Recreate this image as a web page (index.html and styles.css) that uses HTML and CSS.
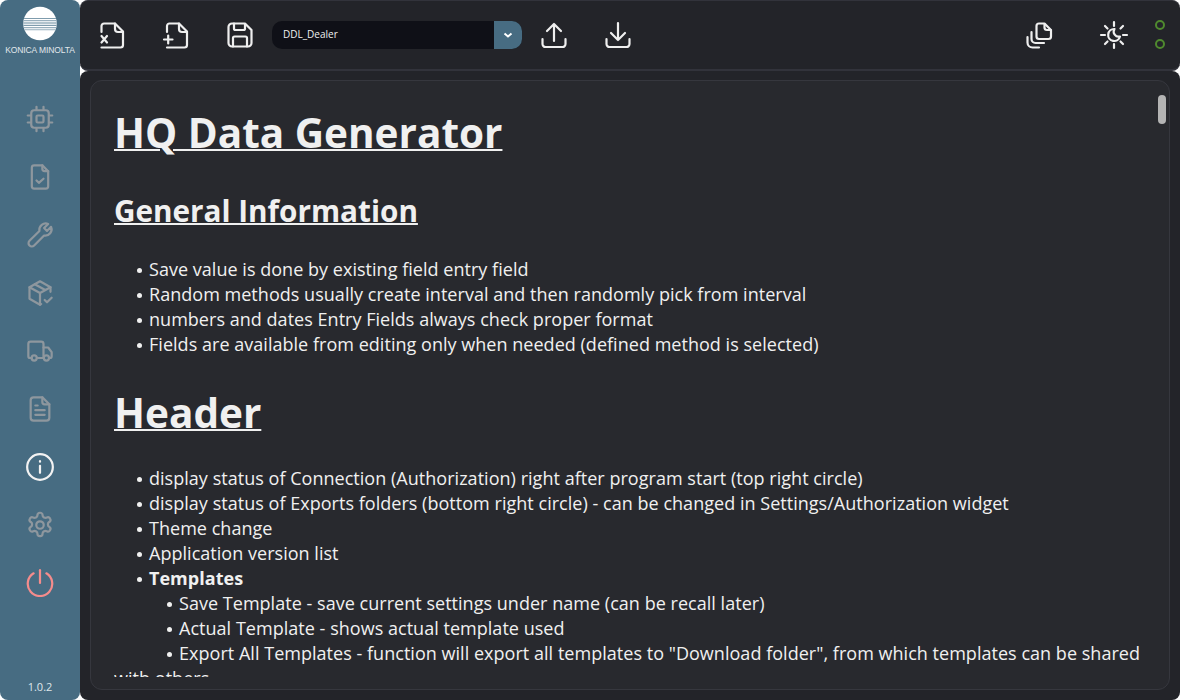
FILE: index.html
```html
<!DOCTYPE html>
<html lang="en">
<head>
<meta charset="utf-8">
<title>HQ Data Generator</title>
<link rel="stylesheet" href="styles.css">
</head>
<body>
<div class="app">
  <aside class="sidebar">
    <div class="logo">
      <svg class="globe" width="34" height="35" viewBox="0 0 34 35">
        <defs><clipPath id="gc"><circle cx="17" cy="17.500" r="16.800"/></clipPath></defs>
        <circle cx="17" cy="17.500" r="16.800" fill="#fff"/>
        <g clip-path="url(#gc)" fill="#7f9cad"><rect x="0" y="12" width="34" height="1"/><rect x="0" y="14.200" width="34" height="1"/><rect x="0" y="16.400" width="34" height="1.200"/><rect x="0" y="18.800" width="34" height="1.200"/><rect x="0" y="21.200" width="34" height="1"/><rect x="0" y="23.400" width="34" height=".8"/></g>
      </svg>
      <div class="brand">KONICA MINOLTA</div>
    </div>
    <nav class="nav">
      <a class="nav-item"><svg viewBox="0 0 24 24"><rect x="4.500" y="4.500" width="15" height="15" rx="2.500"/><rect x="9" y="9" width="6" height="6" rx="1"/><path d="M1.500 9H4M1.500 15H4M20 9h2.500M20 15h2.500M9 1.500V4M15 1.500V4M9 20v2.500M15 20v2.500"/></svg></a>
      <a class="nav-item"><svg viewBox="0 0 24 24"><path d="M14 2H7a2 2 0 0 0-2 2v16a2 2 0 0 0 2 2h10a2 2 0 0 0 2-2V7z"/><path d="M14 2v3a2 2 0 0 0 2 2h3"/><path d="M9 15l2 2 4-3.500"/></svg></a>
      <a class="nav-item"><svg viewBox="0 0 24 24"><path d="M7 21l8.500-8.500a5.500 5.500 0 0 0 6-7.500L18 8.500 15.500 6 19 2.500a5.500 5.500 0 0 0-7.500 6L3 17a2.800 2.800 0 0 0 4 4z"/></svg></a>
      <a class="nav-item"><svg viewBox="0 0 24 24"><path d="M21 11V7l-9-5-9 5v10l9 5 1-.5"/><path d="M3 7l9 5 9-5M12 12v10M7.500 4.500l9 5"/><path d="M16 18l2 2 4-4"/></svg></a>
      <a class="nav-item"><svg viewBox="0 0 24 24"><path d="M5 18H3.500A1.500 1.500 0 0 1 2 16.500V6a2 2 0 0 1 2-2h9a2 2 0 0 1 2 2v12H9.500"/><path d="M15 9h4l3 4v3.500a1.500 1.500 0 0 1-1.500 1.500H20"/><circle cx="7" cy="18" r="2.200"/><circle cx="17.500" cy="18" r="2.200"/></svg></a>
      <a class="nav-item"><svg viewBox="0 0 24 24"><path d="M14 2H6.500A2.500 2.500 0 0 0 4 4.500v15A2.500 2.500 0 0 0 6.500 22h11a2.500 2.500 0 0 0 2.500-2.500V8z"/><path d="M14 2v4a2 2 0 0 0 2 2h4M8 9h2M8 13h8M8 17h8"/></svg></a>
      <a class="nav-item active"><svg viewBox="0 0 24 24"><circle cx="12" cy="12" r="11"/><path d="M12 11v6"/><path d="M12 7v.4"/></svg></a>
      <a class="nav-item"><svg viewBox="0 0 24 24"><path d="M12.200 1.500h-.4a2 2 0 0 0-2 2v.2a2 2 0 0 1-1 1.700l-.4.300a2 2 0 0 1-2 0l-.2-.1a2 2 0 0 0-2.700.7l-.2.400a2 2 0 0 0 .7 2.700l.2.100a2 2 0 0 1 1 1.700v.6a2 2 0 0 1-1 1.700l-.2.100a2 2 0 0 0-.7 2.700l.2.400a2 2 0 0 0 2.700.7l.2-.1a2 2 0 0 1 2 0l.4.300a2 2 0 0 1 1 1.700v.2a2 2 0 0 0 2 2h.4a2 2 0 0 0 2-2v-.2a2 2 0 0 1 1-1.700l.4-.3a2 2 0 0 1 2 0l.2.100a2 2 0 0 0 2.700-.7l.2-.4a2 2 0 0 0-.7-2.700l-.2-.1a2 2 0 0 1-1-1.700v-.6a2 2 0 0 1 1-1.700l.2-.1a2 2 0 0 0 .7-2.700l-.2-.4a2 2 0 0 0-2.700-.7l-.2.100a2 2 0 0 1-2 0l-.4-.3a2 2 0 0 1-1-1.700v-.2a2 2 0 0 0-2-2z"/><circle cx="12" cy="12" r="3.200"/></svg></a>
      <a class="nav-item power"><svg viewBox="0 0 24 24"><path d="M12 1v11"/><path d="M6.500 3.700A10.500 10.500 0 1 0 17.500 3.700"/></svg></a>
    </nav>
    <div class="version">1.0.2</div>
  </aside>

  <div class="right">
    <header class="topbar">
      <button class="tool"><svg viewBox="0 0 26 26"><path d="M2.500 10V4A2.500 2.500 0 0 1 5 1.500h11l8 8V23a2.500 2.500 0 0 1-2.500 2.500h-19"/><path d="M16 1.500V7a3 3 0 0 0 3 3h5"/><path d="M2.500 14l5.500 6.500M8 14l-5.500 6.500"/></svg></button>
      <button class="tool"><svg viewBox="0 0 26 26"><path d="M4 10V4a2.500 2.500 0 0 1 2.500-2.500H16l8 8V23a2.500 2.500 0 0 1-2.500 2.500H4"/><path d="M16 1.500V7a3 3 0 0 0 3 3h5"/><path d="M1 17.500h8.500M5.200 13.500v8"/></svg></button>
      <button class="tool"><svg viewBox="0 0 26 26"><path d="M18 1.500H5A3.500 3.500 0 0 0 1.500 5v16A3.500 3.500 0 0 0 5 24.500h16a3.500 3.500 0 0 0 3.500-3.500V8z"/><path d="M7 1.500v5a1.500 1.500 0 0 0 1.500 1.500h8A1.500 1.500 0 0 0 18 6.500V2"/><path d="M6 24.500V16a1.500 1.500 0 0 1 1.500-1.500h11A1.500 1.500 0 0 1 20 16v8.500"/></svg></button>
      <div class="combo">
        <span class="combo-text">DDL_Dealer</span>
        <span class="combo-btn"><svg viewBox="0 0 10 6"><path d="M1.500 1.500L5 4.500l3.500-3"/></svg></span>
      </div>
      <button class="tool"><svg viewBox="0 0 26 26"><path d="M1.500 17v5a3 3 0 0 0 3 3h17a3 3 0 0 0 3-3v-5"/><path d="M13 19V2M6 9l7-7 7 7"/></svg></button>
      <button class="tool"><svg viewBox="0 0 26 26"><path d="M1.500 17v5a3 3 0 0 0 3 3h17a3 3 0 0 0 3-3v-5"/><path d="M13 1v17M6 11l7 7 7-7"/></svg></button>
      <div class="spacer"></div>
      <button class="tool copy"><svg viewBox="0 0 26 26"><path d="M13 1.500h5.500L25 8v6.500a2.500 2.500 0 0 1-2.500 2.500H13a2.500 2.500 0 0 1-2.500-2.500V4A2.500 2.500 0 0 1 13 1.500z"/><path d="M18.500 2v3.500a2.500 2.500 0 0 0 2.500 2.500h3.500"/><path d="M5.500 10v7a4 4 0 0 0 4 4H18"/><path d="M1.500 15v5.500a5 5 0 0 0 5 5H13"/></svg></button>
      <button class="tool theme"><svg viewBox="0 0 28 28"><path d="M14 1v4M14 23v4M1 14h4M23 14h4M5 5l2.500 2.500M20.500 20.500L23 23M5 23l2.500-2.500M20.500 7.500L23 5"/><path d="M14.500 8a6 6 0 1 0 5.500 7.500 5 5 0 0 1-5.500-7.500z"/></svg></button>
      <div class="status"><span class="dot"></span><span class="dot"></span></div>
    </header>

    <main class="main">
      <article class="doc">
        <div class="scroll-thumb"></div>
        <div class="doc-scroll">
          <h1>HQ Data Generator</h1>
          <h2>General Information</h2>
          <ul>
            <li>Save value is done by existing field entry field</li>
            <li>Random methods usually create interval and then randomly pick from interval</li>
            <li>numbers and dates Entry Fields always check proper format</li>
            <li>Fields are available from editing only when needed (defined method is selected)</li>
          </ul>
          <h1 class="h1-next">Header</h1>
          <ul>
            <li>display status of Connection (Authorization) right after program start (top right circle)</li>
            <li>display status of Exports folders (bottom right circle) - can be changed in Settings/Authorization widget</li>
            <li>Theme change</li>
            <li>Application version list</li>
            <li class="strong">Templates</li>
          </ul>
          <ul class="sub">
            <li>Save Template - save current settings under name (can be recall later)</li>
            <li>Actual Template - shows actual template used</li>
            <li>Export All Templates - function will export all templates to "Download folder", from which templates can be shared with others</li>
          </ul>
        </div>
      </article>
    </main>
  </div>
</div>
</body>
</html>
```

FILE: styles.css
```css
* { box-sizing: border-box; }
html, body { margin: 0; height: 100%; background: #fff; }
body { font-family: "Open Sans", "Noto Sans", sans-serif; overflow: hidden; }
.app { display: flex; width: 1180px; height: 700px; }

.sidebar {
  width: 80px; flex: none; background: #476c82; border-radius: 8px;
  display: flex; flex-direction: column; align-items: center;
}
.logo { display: flex; flex-direction: column; align-items: center; height: 90px; padding-top: 6px; }
.globe { display: block; }
.brand { font-family: "Liberation Sans", sans-serif; font-size: 8.500px; line-height: 10px; color: #e2e8ec; margin-top: 4px; white-space: nowrap; letter-spacing: -.1px; }
.nav { display: flex; flex-direction: column; align-items: center; gap: 30px; margin-top: 15px; }
.nav-item { display: block; width: 28px; height: 28px; color: #8e979e; }
.nav-item svg { display: block; width: 28px; height: 28px; fill: none; stroke: currentColor; stroke-width: 1.900; stroke-linecap: round; stroke-linejoin: round; }
.nav-item.active { color: #f2f2f2; }
.nav-item.power { color: #f58c8c; }
.version { margin-top: auto; padding-bottom: 6px; font-size: 11px; line-height: 15px; color: #dfe6ea; }

.right { flex: 1; min-width: 0; display: flex; flex-direction: column; }
.topbar {
  height: 71px; flex: none; background: #232429; border-radius: 8px;
  border-top: 1px solid #32333b; border-bottom: 2px solid #32333b;
  display: flex; align-items: center; padding: 0 15px 0 19px;
}
.tool { width: 26px; height: 26px; padding: 0; border: 0; background: none; margin-right: 38px; flex: none; }
.tool svg { display: block; width: 26px; height: 26px; overflow: visible; fill: none; stroke: #efefef; stroke-width: 2.200; stroke-linecap: round; stroke-linejoin: round; }
.combo { display: flex; width: 250px; height: 28px; margin: 0 19px 0 -19px; border-radius: 10px; overflow: hidden; background: #0f1017; flex: none; }
.combo-text { flex: 1; padding-left: 11px; font-size: 10px; line-height: 27px; color: #f0f0f0; }
.combo-btn { width: 28px; background: #476c82; display: flex; align-items: center; justify-content: center; }
.combo-btn svg { width: 10px; height: 6px; fill: none; stroke: #fff; stroke-width: 2; }
.spacer { flex: 1; }
.tool.copy { margin-right: 48px; }
.tool.theme { width: 28px; height: 28px; margin-right: 27px; }
.tool.theme svg { width: 28px; height: 28px; }
.status { display: flex; flex-direction: column; gap: 9px; margin-top: -1px; }
.dot { display: block; width: 10px; height: 10px; border-radius: 50%; border: 2px solid #4f8a2e; }

.main { flex: 1; min-height: 0; background: #232429; border-radius: 8px; padding: 9px 10px 10px; }
.doc {
  position: relative; height: 100%; background: #28292e;
  border: 1px solid #36373e; border-radius: 12px; padding: 0 23px 12px; color: #f0f0f0;
}
.doc-scroll { height: 100%; overflow: hidden; padding-top: 25px; }
.scroll-thumb { position: absolute; top: 14px; right: 3px; width: 8px; height: 29px; border-radius: 4px; background: #b4b4b4; }
h1 { margin: 0; font-size: 40.500px; line-height: 54px; font-weight: 700; text-decoration: underline; text-decoration-thickness: 2px; }
h2 { margin: 31px 0 0; font-size: 29.700px; line-height: 40px; font-weight: 700; text-decoration: underline; text-decoration-thickness: 2px; }
.h1-next { margin-top: 29px; }
ul { list-style: none; margin: 0; padding: 0; font-size: 18px; line-height: 25px; letter-spacing: .03px; }
h2 + ul { margin-top: 26px; }
.h1-next + ul { margin-top: 26px; }
li { text-indent: 35px; }
li::before { content: ""; display: inline-block; width: 5px; height: 5px; border-radius: 50%; background: currentColor; margin: 0 7px 0 -12px; vertical-align: 3px; }
.strong { font-weight: 700; }
ul.sub li { text-indent: 65px; }
```
